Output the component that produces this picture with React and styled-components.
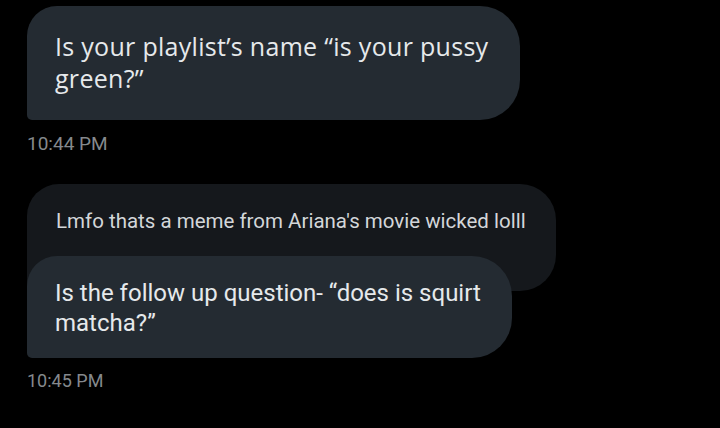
import React from "react";
import styled, { createGlobalStyle } from "styled-components";

const Global = createGlobalStyle`
  html, body {
    margin: 0;
    background: #000;
  }
  body {
    font-family: Roboto, "Noto Sans", Arial, sans-serif;
  }
`;

const Thread = styled.div`
  display: flex;
  flex-direction: column;
  align-items: flex-start;
  padding: 6px 0 0 27px;
  width: 720px;
  height: 428px;
  box-sizing: border-box;
  overflow: hidden;
  background: #000;
`;

// message bubble, first one uses the wider twitter-ish face
const Bubble = styled.div`
  position: relative;
  box-sizing: border-box;
  width: ${(p) => p.width}px;
  background: #242b32;
  color: #e6e9eb;
  font-family: ${(p) => (p.wide ? '"Open Sans", Roboto, sans-serif' : 'Roboto, sans-serif')};
  font-weight: ${(p) => (p.wide ? 500 : 400)};
  font-size: ${(p) => p.size || 24}px;
  line-height: ${(p) => p.lh || 30}px;
  letter-spacing: ${(p) => p.ls || 0}px;
  padding: ${(p) => p.pad};
  border-radius: 30px 40px 40px 5px;
`;

const ReplyQuote = styled.div`
  box-sizing: border-box;
  width: ${(p) => p.width}px;
  height: 107px;
  background: #15181c;
  color: #d3d6d9;
  font-size: 20.5px;
  line-height: 24px;
  padding: 25px 20px 0 29px;
  border-radius: 32px 36px 36px 0;
  margin-top: 29px;
`;

const Stack = styled.div`
  display: flex;
  flex-direction: column;
  align-items: flex-start;
  & > ${Bubble} {
    margin-top: -35px;
  }
`;

const Time = styled.div`
  color: #85898d;
  font-size: ${(p) => p.size || 18}px;
  line-height: 22px;
  margin-top: ${(p) => p.gap || 12}px;
`;

export default function App() {
  return (
    <>
      <Global />
      <Thread>
        <Bubble wide width={493} size={25} lh={32} ls={0.3} pad="24px 20px 26px 28px">
          Is your playlist’s name “is your pussy green?”
        </Bubble>
        <Time size={19} gap={13}>10:44 PM</Time>
        <Stack>
          <ReplyQuote width={529}>
            Lmfo thats a meme from Ariana's movie wicked lolll
          </ReplyQuote>
          <Bubble width={485} size={24} lh={30} pad="22px 20px 20px 28px">
            Is the follow up question- “does is squirt matcha?”
          </Bubble>
        </Stack>
        <Time size={18} gap={12}>10:45 PM</Time>
      </Thread>
    </>
  );
}
